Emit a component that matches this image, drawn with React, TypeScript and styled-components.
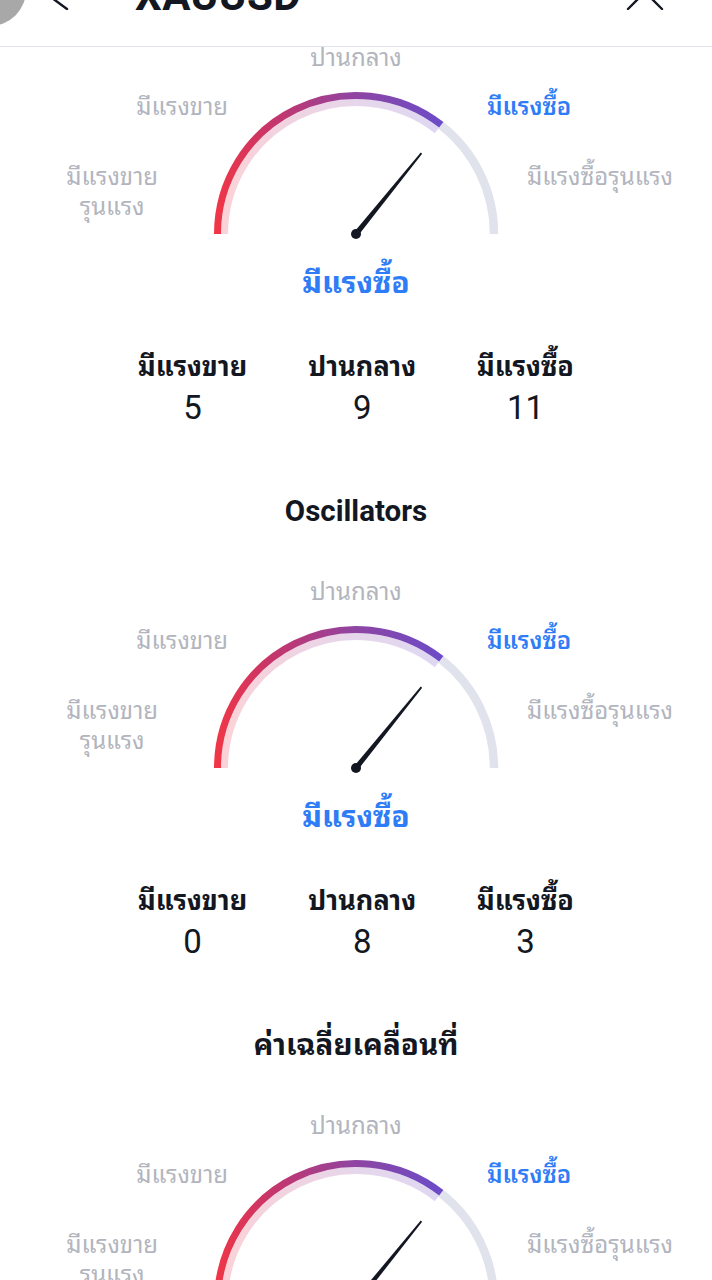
import React from 'react';
import styled, { createGlobalStyle } from 'styled-components';

const Global = createGlobalStyle`
  html, body { margin: 0; padding: 0; background: #ffffff; }
  body {
    font-family: "Noto Sans Thai Looped", "Noto Sans Thai", Roboto, "Noto Sans", "DejaVu Sans", sans-serif;
    color: #131722;
    -webkit-font-smoothing: antialiased;
  }
`;

const Page = styled.div`
  position: relative;
  width: 712px;
  min-height: 1280px;
  overflow: hidden;
  background: #fff;
`;

const Header = styled.header`
  display: flex;
  align-items: flex-start;
  height: 46px;
  padding-left: 44px;
  border-bottom: 1px solid #e0e3eb;
  overflow: hidden;
  background: #fff;
`;

const HeaderIcon = styled.svg<{ $push?: boolean }>`
  flex: none;
  margin-top: -30px;
  margin-left: ${p => (p.$push ? 'auto' : '0')};
  margin-right: ${p => (p.$push ? '47px' : '0')};
`;

const Title = styled.h1`
  margin: -24px 0 0 63px;
  font-family: Roboto, "Noto Sans", sans-serif;
  font-size: 42px;
  line-height: 40px;
  font-weight: 700;
  color: #131722;
  letter-spacing: 0.5px;
`;

const TouchDot = styled.div`
  position: absolute;
  left: -46px;
  top: -46px;
  width: 72px;
  height: 72px;
  border-radius: 50%;
  background: #a8a8a8;
  pointer-events: none;
`;

const Block = styled.section`
  display: flex;
  flex-direction: column;
  align-items: center;
`;

const SectionTitle = styled.h2`
  margin: 71px 0 55px;
  font-size: 29.5px;
  line-height: 30px;
  font-weight: 700;
  color: #131722;
  font-family: Roboto, "Noto Sans Thai Looped", "Noto Sans Thai", "Noto Sans", sans-serif;
`;

const GaugeWrap = styled.div`
  position: relative;
  width: 100%;
  height: 193px;
  display: flex;
  justify-content: center;
  align-items: flex-end;
`;

type Anchor = 'left' | 'right' | 'center';

const GaugeLabel = styled.span<{ $anchor: Anchor; $dx: number; $top: number; $active?: boolean }>`
  position: absolute;
  top: ${p => p.$top}px;
  ${p =>
    p.$anchor === 'center'
      ? `left: 50%; transform: translateX(-50%);`
      : p.$anchor === 'left'
      ? `left: calc(50% + ${p.$dx}px);`
      : `right: calc(50% + ${p.$dx}px);`}
  font-size: 24px;
  line-height: 30px;
  white-space: nowrap;
  text-align: center;
  color: ${p => (p.$active ? '#2e7cf6' : '#b2b5be')};
  font-weight: ${p => (p.$active ? 600 : 400)};
`;

const Verdict = styled.div`
  margin-top: 24px;
  font-size: 30px;
  line-height: 32px;
  font-weight: 700;
  color: #2e7cf6;
`;

const Counts = styled.div`
  display: flex;
  justify-content: center;
  gap: 61px;
  margin-top: 54px;
`;

const CountCol = styled.div`
  display: flex;
  flex-direction: column;
  align-items: center;
`;

const CountLabel = styled.div`
  font-size: 27px;
  line-height: 28px;
  font-weight: 700;
  color: #131722;
`;

const CountValue = styled.div`
  margin-top: 13px;
  font-family: Roboto, "Noto Sans", sans-serif;
  font-size: 33px;
  line-height: 34px;
  font-weight: 400;
  color: #131722;
`;

const CX = 150;
const CY = 146;
const pt = (r: number, deg: number): [number, number] => {
  const a = (deg * Math.PI) / 180;
  return [CX + r * Math.cos(a), CY - r * Math.sin(a)];
};
const arc = (r: number, a0: number, a1: number) => {
  const [x0, y0] = pt(r, a0);
  const [x1, y1] = pt(r, a1);
  return `M ${x0.toFixed(2)} ${y0.toFixed(2)} A ${r} ${r} 0 0 1 ${x1.toFixed(2)} ${y1.toFixed(2)}`;
};

const Dial: React.FC<{ id: string; fill: number; needle: number }> = ({ id, fill, needle }) => {
  const endX = pt(142, fill)[0];
  const a = (needle * Math.PI) / 180;
  const len = 104;
  const tip: [number, number] = [CX + len * Math.cos(a), CY - len * Math.sin(a)];
  const px = Math.sin(a);
  const py = Math.cos(a);
  const bw = 2.6;
  const tw = 0.9;
  const poly = [
    [CX + px * bw, CY + py * bw],
    [tip[0] + px * tw, tip[1] + py * tw],
    [tip[0] - px * tw, tip[1] - py * tw],
    [CX - px * bw, CY - py * bw],
  ]
    .map(p => p.map(v => v.toFixed(2)).join(','))
    .join(' ');
  return (
    <svg width={300} height={152} viewBox="0 0 300 152">
      <defs>
        <linearGradient id={id} gradientUnits="userSpaceOnUse" x1={CX - 142} y1={0} x2={endX} y2={0}>
          <stop offset="0" stopColor="#f23645" />
          <stop offset="0.25" stopColor="#c6356a" />
          <stop offset="0.62" stopColor="#8e45a3" />
          <stop offset="1" stopColor="#6a4cc8" />
        </linearGradient>
      </defs>
      <path d={arc(138, fill, 0)} fill="none" stroke="#e0e3eb" strokeWidth={8.5} />
      <path d={arc(131.5, 180, fill)} fill="none" stroke={`url(#${id})`} strokeOpacity={0.22} strokeWidth={7} />
      <path d={arc(138.5, 180, fill)} fill="none" stroke={`url(#${id})`} strokeWidth={7} />
      <polygon points={poly} fill="#131722" />
      <circle cx={CX} cy={CY} r={5} fill="#131722" />
    </svg>
  );
};

type GaugeData = {
  id: string;
  title?: string;
  sell: number;
  neutral: number;
  buy: number;
};

const Gauge: React.FC<{ data: GaugeData }> = ({ data }) => (
  <Block>
    {data.title && <SectionTitle>{data.title}</SectionTitle>}
    <GaugeWrap>
      <GaugeLabel $anchor="center" $dx={0} $top={-7}>ปานกลาง</GaugeLabel>
      <GaugeLabel $anchor="right" $dx={128} $top={42}>มีแรงขาย</GaugeLabel>
      <GaugeLabel $anchor="left" $dx={131} $top={42} $active>มีแรงซื้อ</GaugeLabel>
      <GaugeLabel $anchor="right" $dx={198} $top={112}>
        มีแรงขาย
        <br />
        รุนแรง
      </GaugeLabel>
      <GaugeLabel $anchor="left" $dx={171} $top={112}>มีแรงซื้อรุนแรง</GaugeLabel>
      <Dial id={`g-${data.id}`} fill={52} needle={51} />
    </GaugeWrap>
    <Verdict>มีแรงซื้อ</Verdict>
    <Counts>
      <CountCol>
        <CountLabel>มีแรงขาย</CountLabel>
        <CountValue>{data.sell}</CountValue>
      </CountCol>
      <CountCol>
        <CountLabel>ปานกลาง</CountLabel>
        <CountValue>{data.neutral}</CountValue>
      </CountCol>
      <CountCol>
        <CountLabel>มีแรงซื้อ</CountLabel>
        <CountValue>{data.buy}</CountValue>
      </CountCol>
    </Counts>
  </Block>
);

const gauges: GaugeData[] = [
  { id: 'summary', sell: 5, neutral: 9, buy: 11 },
  { id: 'osc', title: 'Oscillators', sell: 0, neutral: 8, buy: 3 },
  { id: 'ma', title: 'ค่าเฉลี่ยเคลื่อนที่', sell: 5, neutral: 1, buy: 8 },
];

export default function App() {
  return (
    <Page>
      <Global />
      <Header>
        <HeaderIcon width={28} height={40} viewBox="0 0 28 40">
          <polyline points="23,11 4,25 23,39" fill="none" stroke="#131722" strokeWidth={2.4} strokeLinecap="round" strokeLinejoin="round" />
        </HeaderIcon>
        <Title>XAUUSD</Title>
        <HeaderIcon $push width={40} height={40} viewBox="0 0 40 40">
          <path d="M3 5 L37 39 M37 5 L3 39" fill="none" stroke="#131722" strokeWidth={2.4} strokeLinecap="round" />
        </HeaderIcon>
      </Header>
      {gauges.map(g => (
        <Gauge key={g.id} data={g} />
      ))}
      <TouchDot />
    </Page>
  );
}
